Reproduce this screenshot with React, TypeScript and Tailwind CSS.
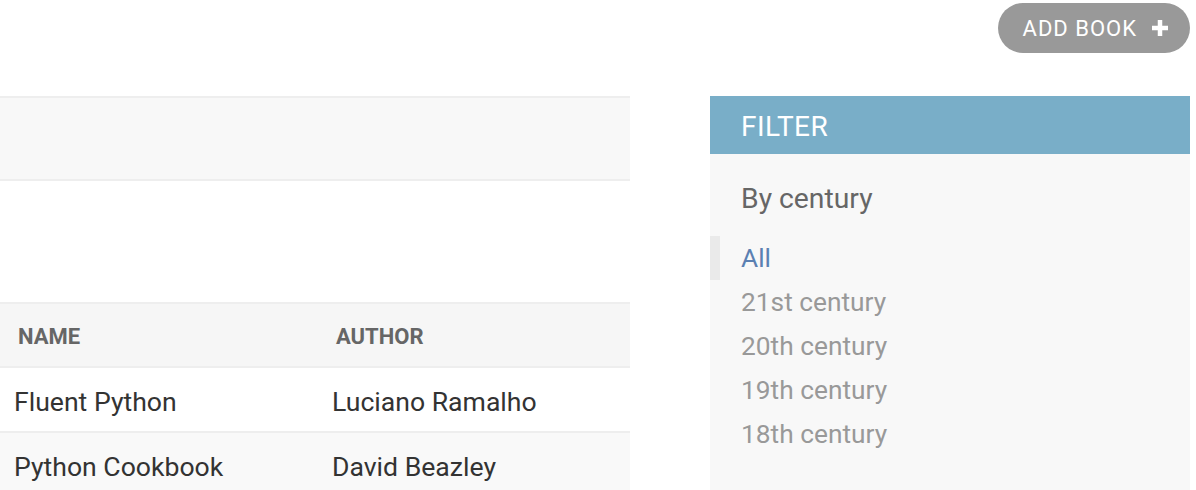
const books = [
  { name: "Fluent Python", author: "Luciano Ramalho" },
  { name: "Python Cookbook", author: "David Beazley" },
];

const centuries = ["21st century", "20th century", "19th century", "18th century"];

export default function App() {
  return (
    <div className="h-[490px] w-[1196px] overflow-hidden bg-white font-['Roboto',sans-serif]">
      <div className="flex justify-end pr-[6px] pt-[3px]">
        <a className="flex h-[50px] items-center gap-[15px] rounded-full bg-[#999999] pl-[25px] pr-[22px] text-[22px] uppercase tracking-[1px] text-white">
          Add book
          <svg width="16" height="16" viewBox="0 0 16 16">
            <rect x="5.75" y="0" width="4.5" height="16" fill="white" />
            <rect x="0" y="5.75" width="16" height="4.5" fill="white" />
          </svg>
        </a>
      </div>

      <div className="mt-[43px] flex gap-[80px]">
        <div className="w-[630px]">
          <div className="h-[85px] border-y-2 border-[#eeeeee] bg-[#f8f8f8]" />

          <div className="mt-[121px] border-t-2 border-[#eeeeee]">
            <div className="grid h-[64px] grid-cols-[316px_1fr] items-center border-b-2 border-[#eeeeee] bg-[#f6f6f6] pt-[2px] text-[22px] font-bold uppercase text-[#666666]">
              <div className="pl-[18px]">Name</div>
              <div className="pl-[20px]">Author</div>
            </div>
            {books.map((b, i) => (
              <div
                key={b.name}
                className={
                  "grid h-[65px] grid-cols-[316px_1fr] items-center border-b-2 border-[#eeeeee] pt-[4px] text-[26.6px] text-[#333333] " +
                  (i % 2 ? "bg-[#f9f9f9]" : "bg-white")
                }
              >
                <div className="pl-[14px]">{b.name}</div>
                <div className="pl-[16px]">{b.author}</div>
              </div>
            ))}
          </div>
        </div>

        <div className="h-[394px] w-[480px] bg-[#f8f8f8]">
          <div className="flex h-[58px] items-center bg-[#79aec8] pl-[31px] pt-[4px] text-[28px] uppercase tracking-[0.5px] text-white">
            Filter
          </div>
          <h3 className="mt-[29px] pl-[31px] text-[28.3px] leading-[32px] text-[#666666]">By century</h3>
          <ul className="mt-[21px] text-[26.3px]">
            <li className="flex h-[44px] items-center border-l-[10px] border-[#eaeaea] pl-[21px] pt-[2px] text-[#5b80b2]">All</li>
            {centuries.map((c) => (
              <li key={c} className="flex h-[44px] items-center pl-[31px] pt-[2px] text-[#999999]">
                {c}
              </li>
            ))}
          </ul>
        </div>
      </div>
    </div>
  );
}
